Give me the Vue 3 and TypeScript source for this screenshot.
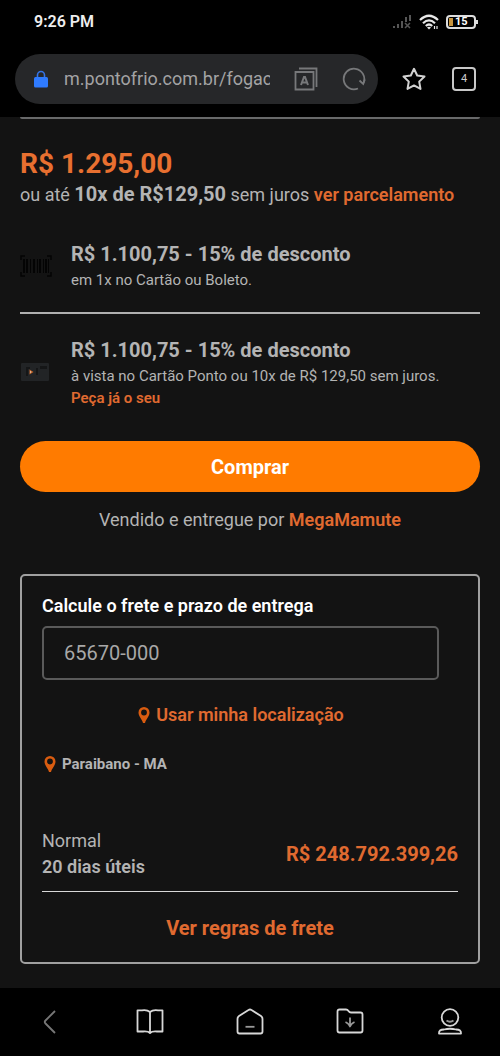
<script setup lang="ts">
import { ref } from 'vue'

interface Offer {
  icon: 'barcode' | 'card'
  title: string
  detail: string
  link?: string
}

const address = ref<string>('m.pontofrio.com.br/fogac')
const zipCode = ref<string>('65670-000')

const offers: Offer[] = [
  { icon: 'barcode', title: 'R$ 1.100,75 - 15% de desconto', detail: 'em 1x no Cartão ou Boleto.' },
  {
    icon: 'card',
    title: 'R$ 1.100,75 - 15% de desconto',
    detail: 'à vista no Cartão Ponto ou 10x de R$ 129,50 sem juros.',
    link: 'Peça já o seu',
  },
]
</script>

<template>
  <div class="screen">
    <header class="chrome">
      <div class="status">
        <span class="clock">9:26 PM</span>
        <div class="indicators">
          <svg class="signal" width="20" height="16" viewBox="0 0 20 16" fill="none" stroke="#565656" stroke-width="2">
            <path d="M2 14v-2M6 14v-4M10 14V7M14 8V3M18 7V1" />
            <path d="M13 9l5 5M18 9l-5 5" stroke-width="1.500" />
          </svg>
          <svg width="20" height="16" viewBox="0 0 20 16" fill="none" stroke="#e8e8e8" stroke-width="2.200">
            <path d="M1 6Q10 -2.500 19 6M4 9.200Q10 3.600 16 9.200M6.800 12Q10 9 13.200 12" />
            <path d="M8 13.500Q10 12 12 13.500L10 15.500Z" fill="#e8e8e8" stroke="none" />
            <path d="M15.500 15v-3M18 12v3" stroke-width="1.200" />
          </svg>
          <span class="battery"><i class="charge"></i>15</span>
        </div>
      </div>
      <div class="toolbar">
        <div class="address">
          <svg width="16" height="18" viewBox="0 0 16 18" fill="none">
            <path d="M4.500 8V5a3.500 3.500 0 0 1 7 0v3" stroke="#3474e8" stroke-width="1.600" />
            <rect x="1" y="7" width="14" height="10.500" rx="1.500" fill="#2f7bff" />
          </svg>
          <input v-model="address" class="url" type="text" aria-label="Endereço" />
          <button class="icon-button" type="button" aria-label="Traduzir">
            <svg width="24" height="24" viewBox="0 0 24 24" fill="none" stroke="#77787a" stroke-width="1.800">
              <path d="M1.500 5h18v17.500h-18zM5 1.500h17.500V20" />
              <path d="M7 18l3-8h1l3 8M8 15.500h5" stroke-width="2" />
            </svg>
          </button>
          <button class="icon-button" type="button" aria-label="Recarregar">
            <svg width="24" height="24" viewBox="0 0 24 24" fill="none" stroke="#77787a" stroke-width="1.800">
              <path d="M16 21.500A10.300 10.300 0 1 1 21.500 16" />
              <path d="M17.500 13.500L21.200 17 22.800 12.500" />
            </svg>
          </button>
        </div>
        <button class="icon-button" type="button" aria-label="Adicionar aos favoritos">
          <svg width="24" height="24" viewBox="0 0 24 24" fill="none" stroke="#d2d2d2" stroke-width="2" stroke-linejoin="round">
            <path d="M12 1.800l3.200 6.700 7.300 1-5.300 5.100 1.300 7.300-6.500-3.500-6.500 3.500 1.300-7.300L1.500 9.500l7.300-1z" />
          </svg>
        </button>
        <button class="tabs" type="button" aria-label="4 abas abertas">4</button>
      </div>
    </header>

    <main class="page">
      <div class="gallery-edge"></div>
      <p class="price">R$ 1.295,00</p>
      <p class="installments">
        ou até <strong>10x de R$129,50</strong> sem juros <a class="link" href="#parcelamento">ver parcelamento</a>
      </p>

      <ul class="offers">
        <li v-for="offer in offers" :key="offer.icon" class="offer">
          <svg v-if="offer.icon === 'barcode'" width="32" height="22" viewBox="0 0 32 22" fill="none" stroke="#040404">
            <path d="M1 5V1h4M27 1h4v4M31 17v4h-4M5 21H1v-4" stroke-width="1.500" />
            <path d="M4 4v14M7 4v14M14 4v14M20 4v14M26 4v14" stroke-width="2" />
            <path d="M10.500 4v14M17.500 4v14M23.500 4v14M28.500 4v14" stroke-width="1" />
          </svg>
          <svg v-else width="32" height="18" viewBox="0 0 32 18">
            <rect x="1" width="28" height="18" rx="1" fill="#222426" />
            <path d="M6 4h4v2H8v7H6zM16 5h2v7h-2zM20 3h7v3h-7z" fill="#151617" />
            <path d="M9.500 6.500l4 2.500-4 2.500z" fill="#c9672a" />
            <path d="M10 8l1.500 1-1.500 1z" fill="#e8d6c5" />
          </svg>
          <div class="offer-text">
            <h2 class="offer-title">{{ offer.title }}</h2>
            <p class="offer-detail">{{ offer.detail }}</p>
            <a v-if="offer.link" class="link offer-link" href="#cartao">{{ offer.link }}</a>
          </div>
        </li>
      </ul>

      <button class="buy" type="button">Comprar</button>
      <p class="seller">Vendido e entregue por <a class="link" href="#vendedor">MegaMamute</a></p>

      <section class="shipping">
        <label class="shipping-title" for="zip">Calcule o frete e prazo de entrega</label>
        <input id="zip" v-model="zipCode" class="zip" type="text" inputmode="numeric" />
        <a class="link locate" href="#localizacao">
          <svg width="12" height="16" viewBox="0 0 12 16">
            <path fill="#d95c10" fill-rule="evenodd" d="M6 0a5.500 5.500 0 0 1 5.500 5.500C11.500 9.500 8 12 7 16H5C4 12 .5 9.500.5 5.500A5.500 5.500 0 0 1 6 0zm0 2.600a2.900 2.900 0 1 0 0 5.800 2.900 2.900 0 0 0 0-5.800z" />
          </svg>
          Usar minha localização
        </a>
        <p class="city">
          <svg width="12" height="16" viewBox="0 0 12 16">
            <path fill="#d95c10" fill-rule="evenodd" d="M6 0a5.500 5.500 0 0 1 5.500 5.500C11.500 9.500 8 12 7 16H5C4 12 .5 9.500.5 5.500A5.500 5.500 0 0 1 6 0zm0 2.600a2.900 2.900 0 1 0 0 5.800 2.900 2.900 0 0 0 0-5.800z" />
          </svg>
          Paraibano - MA
        </p>
        <div class="delivery">
          <div class="method">
            <span>Normal</span>
            <strong>20 dias úteis</strong>
          </div>
          <span class="cost">R$ 248.792.399,26</span>
        </div>
        <a class="link rules" href="#regras">Ver regras de frete</a>
      </section>
    </main>

    <nav class="bottom" aria-label="Navegador">
      <button class="icon-button" type="button" aria-label="Voltar">
        <svg width="28" height="28" viewBox="0 0 28 28" fill="none" stroke="#777" stroke-width="1.800">
          <path d="M19 3L9.500 12.500q-1.500 1.500 0 3L19 25" />
        </svg>
      </button>
      <button class="icon-button" type="button" aria-label="Leitura">
        <svg width="28" height="28" viewBox="0 0 28 28" fill="none" stroke="#d8d8d8" stroke-width="1.800" stroke-linejoin="round">
          <path d="M14 4Q11 1.500 6 2.300H1.500V23.500H7Q12 23 14 25Q16 23 21 23.500H26.500V2.300H22Q17 1.500 14 4zV25" />
        </svg>
      </button>
      <button class="icon-button" type="button" aria-label="Início">
        <svg width="28" height="28" viewBox="0 0 28 28" fill="none" stroke="#d8d8d8" stroke-width="1.800" stroke-linejoin="round">
          <path d="M12.500 2q1.500-1 3 0L25 8q1.500 1 1.500 3V23.500q0 2-2 2h-21q-2 0-2-2V11q0-2 1.500-3z" />
          <path d="M9.500 18.800h9" stroke="#999" />
        </svg>
      </button>
      <button class="icon-button" type="button" aria-label="Downloads">
        <svg width="28" height="28" viewBox="0 0 28 28" fill="none" stroke="#d8d8d8" stroke-width="1.800" stroke-linejoin="round">
          <path d="M3.500 1.500H10q1.500 0 2.500 1.500T15 4.500h9.500q2 0 2 2v16q0 2-2 2h-21q-2 0-2-2V3.500q0-2 2-2z" />
          <path d="M14 9.500v9M9.500 14Q13 15.500 14 18.500Q15 15.500 18.500 14" stroke="#999" />
        </svg>
      </button>
      <button class="icon-button" type="button" aria-label="Perfil">
        <svg width="28" height="28" viewBox="0 0 28 28" fill="none" stroke="#d8d8d8" stroke-width="1.800" stroke-linejoin="round">
          <circle cx="14" cy="9.500" r="8.300" />
          <path d="M10.500 12.500Q14 15 17.500 12.500" stroke="#999" />
          <path d="M3 25.600Q2.500 21.500 8 21.500q6-1.500 12 0 5.500 0 5 4.100z" />
        </svg>
      </button>
    </nav>
  </div>
</template>

<style>
body {
  margin: 0;
  background: #131313;
}
</style>

<style scoped>
.screen {
  min-height: 100vh;
  display: flex;
  flex-direction: column;
  background: #131313;
  color: #b4b4b4;
  font-family: Roboto, "Liberation Sans", sans-serif;
  font-size: 18px;
  line-height: 24px;
}
p,
h2,
ul {
  margin: 0;
  padding: 0;
}
svg {
  display: block;
  flex: none;
}
button,
input {
  font: inherit;
  box-sizing: border-box;
}
strong {
  font-weight: 600;
}
.link {
  color: #e06a30;
  font-weight: 600;
  text-decoration: none;
}
.icon-button {
  padding: 0;
  border: 0;
  background: none;
}
.chrome {
  background: #000;
  padding-bottom: 13px;
}
.status {
  height: 44px;
  padding: 0 24px 0 34px;
  display: flex;
  align-items: center;
  justify-content: space-between;
}
.clock {
  color: #eee;
  font-size: 16px;
  font-weight: 600;
}
.indicators {
  display: flex;
  align-items: center;
  gap: 7px;
}
.battery {
  position: relative;
  display: flex;
  align-items: center;
  box-sizing: border-box;
  width: 30px;
  height: 14px;
  padding-left: 1px;
  gap: 2px;
  border: 2px solid #ddd;
  border-radius: 4px;
  color: #fff;
  font-size: 11px;
  font-weight: 700;
  line-height: 10px;
}
.battery::after {
  content: "";
  position: absolute;
  right: -4px;
  top: 3px;
  width: 2px;
  height: 4px;
  background: #ddd;
}
.charge {
  width: 4px;
  height: 8px;
  background: #c8943c;
}
.toolbar {
  margin-top: 10px;
  padding: 0 24px 0 15px;
  display: flex;
  align-items: center;
  gap: 26px;
}
.toolbar > .icon-button {
  margin-left: -2px;
}
.address {
  flex: 1;
  min-width: 0;
  height: 50px;
  padding: 0 12px 0 18px;
  box-sizing: border-box;
  display: flex;
  align-items: center;
  gap: 24px;
  border-radius: 25px;
  background: #262729;
}
.url {
  flex: 1;
  min-width: 0;
  margin-left: -9px;
  padding: 0;
  border: 0;
  background: none;
  color: #a3a3a4;
  font-size: 18px;
}
.tabs {
  width: 24px;
  height: 24px;
  padding: 0;
  border: 2px solid #c8c8c8;
  border-radius: 4px;
  background: none;
  color: #ccc;
  font-size: 11px;
  line-height: 18px;
}
.page {
  flex: 1;
  display: flex;
  flex-direction: column;
  padding: 0 20px 24px;
}
.gallery-edge {
  height: 2px;
  background: #68696a;
  border-radius: 0 0 4px 4px;
}
.price {
  margin-top: 28px;
  color: #e87030;
  font-size: 28px;
  font-weight: 700;
  line-height: 34px;
}
.installments strong {
  font-size: 20px;
  font-weight: 700;
}
.installments {
  line-height: 26px;
}
.offers {
  list-style: none;
}
.offer {
  display: flex;
  align-items: center;
  gap: 19px;
  padding: 32px 0 20px;
}
.offer + .offer {
  padding: 22px 0 33px;
  border-top: 2px solid #b0b0b0;
}
.offer-title {
  font-size: 20px;
  font-weight: 700;
  line-height: 28px;
}
.offer-detail {
  font-size: 15px;
}
.offer-link {
  display: block;
  font-size: 15px;
  line-height: 20px;
}
.buy {
  height: 51px;
  border: 0;
  border-radius: 26px;
  background: #ff7b00;
  color: #fff;
  font-size: 20px;
  font-weight: 700;
}
.seller {
  margin-top: 16px;
  text-align: center;
}
.shipping {
  margin-top: 42px;
  padding: 18px 20px 22px;
  display: flex;
  flex-direction: column;
  border: 2px solid #a0a0a0;
  border-radius: 5px;
}
.shipping-title {
  color: #fff;
  font-weight: 600;
}
.zip {
  height: 54px;
  margin: 8px 19px 0 0;
  padding: 0 20px;
  border: 2px solid #5a5a5a;
  border-radius: 5px;
  background: transparent;
  color: #a8a8a8;
  font-size: 20px;
}
.locate {
  margin: 23px 18px 0 0;
  align-self: center;
  display: flex;
  align-items: center;
  gap: 6px;
}
.city {
  margin: 25px 0 0 2px;
  display: flex;
  align-items: center;
  gap: 6px;
  font-size: 15px;
  font-weight: 700;
}
.delivery {
  margin-top: 52px;
  padding-bottom: 11px;
  display: flex;
  align-items: center;
  justify-content: space-between;
  border-bottom: 1px solid #d8d8d8;
}
.method {
  display: flex;
  flex-direction: column;
  line-height: 26px;
}
.cost {
  color: #e06a30;
  font-size: 20px;
  font-weight: 700;
}
.rules {
  margin-top: 24px;
  align-self: center;
  font-size: 20px;
  font-weight: 700;
}
.bottom {
  height: 68px;
  display: flex;
  align-items: center;
  justify-content: space-around;
  background: #000;
}
</style>
